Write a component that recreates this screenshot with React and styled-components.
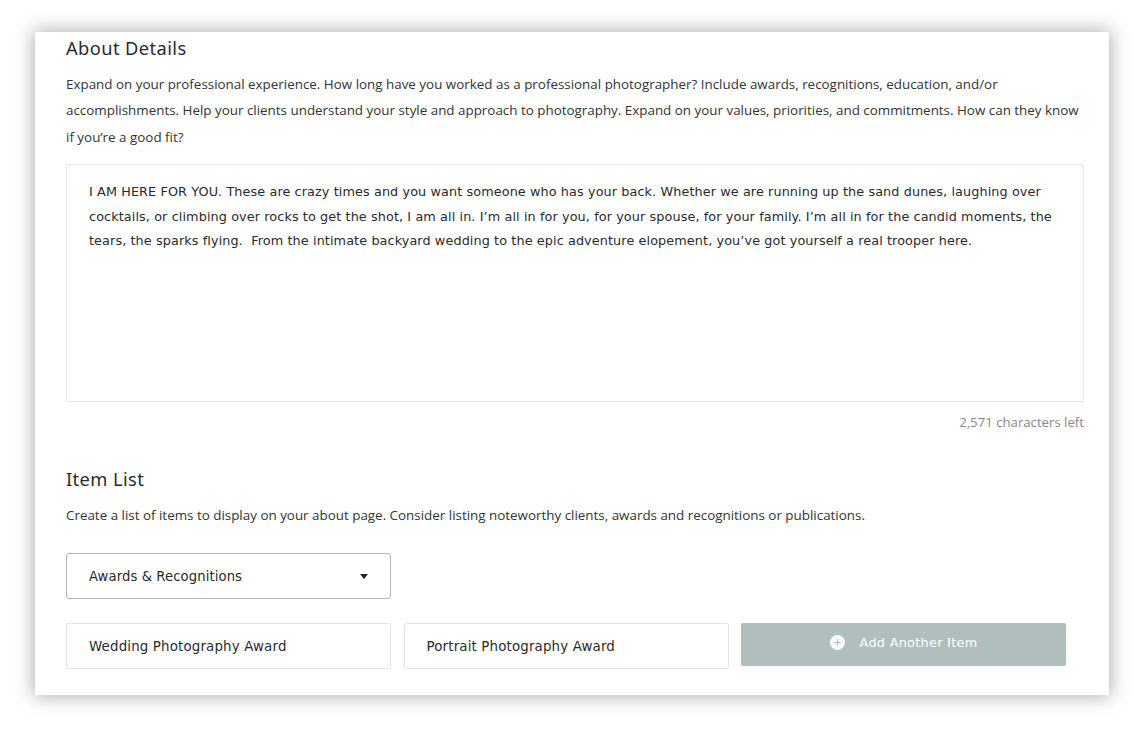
import React, { useState } from "react";
import styled, { createGlobalStyle } from "styled-components";

const GlobalStyle = createGlobalStyle`
  html, body {
    margin: 0;
    padding: 0;
    background: #ffffff;
  }
  * {
    box-sizing: border-box;
  }
`;

const ABOUT_TEXT =
  "I AM HERE FOR YOU. These are crazy times and you want someone who has your back. Whether we are running up the sand dunes, laughing over cocktails, or climbing over rocks to get the shot, I am all in. I\u2019m all in for you, for your spouse, for your family. I\u2019m all in for the candid moments, the tears, the sparks flying.  From the intimate backyard wedding to the epic adventure elopement, you\u2019ve got yourself a real trooper here.";

const MAX_CHARS = 3000;

function App() {
  const [about, setAbout] = useState(ABOUT_TEXT);
  const [category, setCategory] = useState("Awards & Recognitions");

  return (
    <>
      <GlobalStyle />
      <Page>
        <Card>
          <SectionTitle>About Details</SectionTitle>
          <Description>
            Expand on your professional experience. How long have you worked as a
            professional photographer? Include awards, recognitions, education,
            and/or accomplishments. Help your clients understand your style and
            approach to photography. Expand on your values, priorities, and
            commitments. How can they know if you’re a good fit?
          </Description>
          <AboutArea value={about} onChange={(e) => setAbout(e.target.value)} />
          <Counter>
            {(MAX_CHARS - 429).toLocaleString("en-US")} characters left
          </Counter>

          <SectionTitle $spaced>Item List</SectionTitle>
          <Description>
            Create a list of items to display on your about page. Consider listing
            noteworthy clients, awards and recognitions or publications.
          </Description>

          <SelectWrap>
            <Select value={category} onChange={(e) => setCategory(e.target.value)}>
              <option>Awards & Recognitions</option>
              <option>Clients</option>
              <option>Publications</option>
            </Select>
            <Caret viewBox="0 0 8 5" aria-hidden="true">
              <path d="M0 0 L8 0 L4 5 Z" fill="#222" />
            </Caret>
          </SelectWrap>

          <ItemRow>
            <ItemInput defaultValue="Wedding Photography Award" />
            <ItemInput defaultValue="Portrait Photography Award" />
            <AddButton type="button">
              <svg width="15" height="15" viewBox="0 0 15 15" aria-hidden="true">
                <circle cx="7.5" cy="7.5" r="7.5" fill="#ffffff" />
                <path
                  d="M7.5 4.2 V10.8 M4.2 7.5 H10.8"
                  stroke="#b0bebe"
                  strokeWidth="1.2"
                />
              </svg>
              Add Another Item
            </AddButton>
          </ItemRow>
        </Card>
      </Page>
    </>
  );
}

export default App;

const Page = styled.div`
  padding: 32px 25px 35px 35px;
`;

const Card = styled.div`
  width: 1074px;
  background: #ffffff;
  padding: 4px 25px 26px 31px;
  box-shadow: 0 0 18px 2px rgba(0, 0, 0, 0.3);
  display: flex;
  flex-direction: column;
`;

const SectionTitle = styled.h2`
  margin: ${(p) => (p.$spaced ? "35px" : "0")} 0 0;
  font-family: "Noto Sans", "Open Sans", sans-serif;
  font-weight: 400;
  font-size: 18.3px;
  line-height: 24px;
  letter-spacing: 0.4px;
  color: #2b2b2b;
`;

const Description = styled.p`
  margin: 10.5px 0 0;
  font-family: "Open Sans", sans-serif;
  font-size: 13.4px;
  line-height: 26.5px;
  color: #333333;
`;

const AboutArea = styled.textarea`
  display: block;
  margin-top: 14px;
  width: 100%;
  height: 238px;
  resize: none;
  border: 1px solid #e8e8e8;
  border-radius: 2px;
  padding: 15px 3px 13px 22px;
  font-family: "DejaVu Sans", sans-serif;
  font-size: 12.8px;
  line-height: 24.5px;
  letter-spacing: 0.1px;
  color: #2a2a2a;
  outline: none;
`;

const Counter = styled.div`
  margin-top: 10px;
  text-align: right;
  font-family: "Open Sans", sans-serif;
  font-size: 13.2px;
  line-height: 20px;
  color: #888888;
`;

const SelectWrap = styled.div`
  position: relative;
  margin-top: 24.5px;
  width: 325px;
  height: 46px;
`;

const Select = styled.select`
  appearance: none;
  width: 100%;
  height: 100%;
  border: 1px solid #b5b5b5;
  border-radius: 3px;
  background: #ffffff;
  padding: 2px 22px 0;
  font-family: "DejaVu Sans", sans-serif;
  font-size: 13.2px;
  letter-spacing: 0.1px;
  color: #2a2a2a;
  outline: none;
`;

const Caret = styled.svg`
  position: absolute;
  right: 23px;
  top: 21px;
  width: 8px;
  height: 5px;
  pointer-events: none;
`;

const ItemRow = styled.div`
  margin-top: 24px;
  display: grid;
  grid-template-columns: repeat(3, 325px);
  column-gap: 12.5px;
  align-items: start;
`;

const ItemInput = styled.input`
  height: 46px;
  border: 1px solid #e6e6e6;
  border-radius: 2px;
  padding: 2px 22px 0;
  font-family: "DejaVu Sans", sans-serif;
  font-size: 13.4px;
  letter-spacing: 0.15px;
  color: #2a2a2a;
  outline: none;
`;

const AddButton = styled.button`
  height: 43px;
  border: none;
  border-radius: 2px;
  background: #b0bebe;
  color: #ffffff;
  display: flex;
  align-items: center;
  justify-content: center;
  gap: 15px;
  padding: 0 0 4px 0;
  font-family: "DejaVu Sans", sans-serif;
  font-weight: 400;
  font-size: 12.8px;
  letter-spacing: 0.3px;
  cursor: pointer;
`;
